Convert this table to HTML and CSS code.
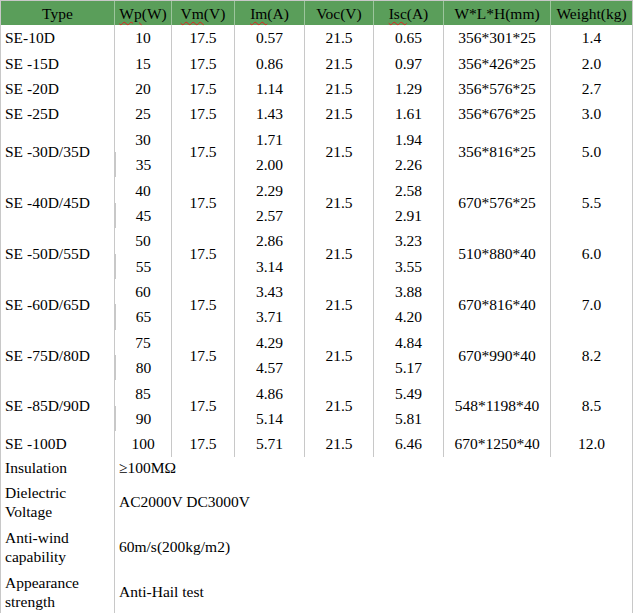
FILE: index.html
```html
<!DOCTYPE html>
<html>
<head>
<meta charset="utf-8">
<link rel="stylesheet" href="styles.css">
</head>
<body>
<table class="spec">
  <thead>
    <tr class="head">
      <th class="c1">Type</th>
      <th class="c2"><span class="sp">Wp</span>(W)</th>
      <th class="c3"><span class="sp">Vm</span>(V)</th>
      <th class="c4"><span class="sp">Im</span>(A)</th>
      <th class="c5">Voc(V)</th>
      <th class="c6"><span class="sp">Isc</span>(A)</th>
      <th class="c7">W*L*H(mm)</th>
      <th class="c8">Weight(kg)</th>
    </tr>
  </thead>
  <tbody>
    <tr class="row"><td class="type">SE-10D</td><td>10</td><td>17.5</td><td>0.57</td><td>21.5</td><td>0.65</td><td>356*301*25</td><td>1.4</td></tr>
    <tr class="row"><td class="type">SE -15D</td><td>15</td><td>17.5</td><td>0.86</td><td>21.5</td><td>0.97</td><td>356*426*25</td><td>2.0</td></tr>
    <tr class="row"><td class="type">SE -20D</td><td>20</td><td>17.5</td><td>1.14</td><td>21.5</td><td>1.29</td><td>356*576*25</td><td>2.7</td></tr>
    <tr class="row"><td class="type">SE -25D</td><td>25</td><td>17.5</td><td>1.43</td><td>21.5</td><td>1.61</td><td>356*676*25</td><td>3.0</td></tr>

    <tr class="row"><td class="type" rowspan="2">SE -30D/35D</td><td>30</td><td rowspan="2">17.5</td><td>1.71</td><td rowspan="2">21.5</td><td>1.94</td><td rowspan="2">356*816*25</td><td rowspan="2">5.0</td></tr>
    <tr class="row"><td>35</td><td>2.00</td><td>2.26</td></tr>

    <tr class="row"><td class="type" rowspan="2">SE -40D/45D</td><td>40</td><td rowspan="2">17.5</td><td>2.29</td><td rowspan="2">21.5</td><td>2.58</td><td rowspan="2">670*576*25</td><td rowspan="2">5.5</td></tr>
    <tr class="row"><td>45</td><td>2.57</td><td>2.91</td></tr>

    <tr class="row"><td class="type" rowspan="2">SE -50D/55D</td><td>50</td><td rowspan="2">17.5</td><td>2.86</td><td rowspan="2">21.5</td><td>3.23</td><td rowspan="2">510*880*40</td><td rowspan="2">6.0</td></tr>
    <tr class="row"><td>55</td><td>3.14</td><td>3.55</td></tr>

    <tr class="row"><td class="type" rowspan="2">SE -60D/65D</td><td>60</td><td rowspan="2">17.5</td><td>3.43</td><td rowspan="2">21.5</td><td>3.88</td><td rowspan="2">670*816*40</td><td rowspan="2">7.0</td></tr>
    <tr class="row"><td>65</td><td>3.71</td><td>4.20</td></tr>

    <tr class="row"><td class="type" rowspan="2">SE -75D/80D</td><td>75</td><td rowspan="2">17.5</td><td>4.29</td><td rowspan="2">21.5</td><td>4.84</td><td rowspan="2">670*990*40</td><td rowspan="2">8.2</td></tr>
    <tr class="row"><td>80</td><td>4.57</td><td>5.17</td></tr>

    <tr class="row"><td class="type" rowspan="2">SE -85D/90D</td><td>85</td><td rowspan="2">17.5</td><td>4.86</td><td rowspan="2">21.5</td><td>5.49</td><td rowspan="2">548*1198*40</td><td rowspan="2">8.5</td></tr>
    <tr class="row"><td>90</td><td>5.14</td><td>5.81</td></tr>

    <tr class="row"><td class="type">SE -100D</td><td>100</td><td>17.5</td><td>5.71</td><td>21.5</td><td>6.46</td><td>670*1250*40</td><td>12.0</td></tr>

    <tr class="extra r1"><td class="label">Insulation</td><td class="value" colspan="7">≥100MΩ</td></tr>
    <tr class="extra r2"><td class="label">Dielectric Voltage</td><td class="value" colspan="7">AC2000V DC3000V</td></tr>
    <tr class="extra r2"><td class="label">Anti-wind capability</td><td class="value" colspan="7">60m/s(200kg/m2)</td></tr>
    <tr class="extra r2"><td class="label">Appearance strength</td><td class="value" colspan="7">Anti-Hail test</td></tr>
  </tbody>
</table>
</body>
</html>
```

FILE: styles.css
```css
html, body {
  margin: 0;
  padding: 0;
  background: #ffffff;
}

.spec {
  border-collapse: separate;
  border-spacing: 0;
  table-layout: fixed;
  width: 633px;
  font-family: "Liberation Serif", "Times New Roman", serif;
  font-size: 15.5px;
  color: #000;
  border-top: 1px solid #c8c8c8;
}

.spec th,
.spec td {
  box-sizing: border-box;
  border-right: 1px solid #c8c8c8;
  padding: 0 4px;
  text-align: center;
  vertical-align: middle;
  white-space: nowrap;
  font-weight: normal;
  line-height: 17px;
}

.spec tr > :first-child {
  border-left: 1px solid #c8c8c8;
}

.head th {
  background: #5a9e5a;
  height: 24px;
  border-right-color: #9cc59c;
}
.head th:last-child {
  border-right-color: #c8c8c8;
}

.c1 { width: 115px; }
.c2 { width: 57px; }
.c3 { width: 63px; }
.c4 { width: 70px; }
.c5 { width: 69px; }
.c6 { width: 70px; }
.c7 { width: 107px; }
.c8 { width: 82px; }

.sp {
  text-decoration: underline wavy #e02020;
  text-decoration-thickness: 1px;
  text-underline-offset: 2px;
}

.row {
  height: 25.4px;
}

.spec td.type {
  text-align: left;
}

.spec td.label,
.spec td.value {
  text-align: left;
  white-space: normal;
  line-height: 19.5px;
}

.spec td.label {
  padding-right: 20px;
}

.r1 { height: 23px; }
.r2 { height: 45px; }
```
